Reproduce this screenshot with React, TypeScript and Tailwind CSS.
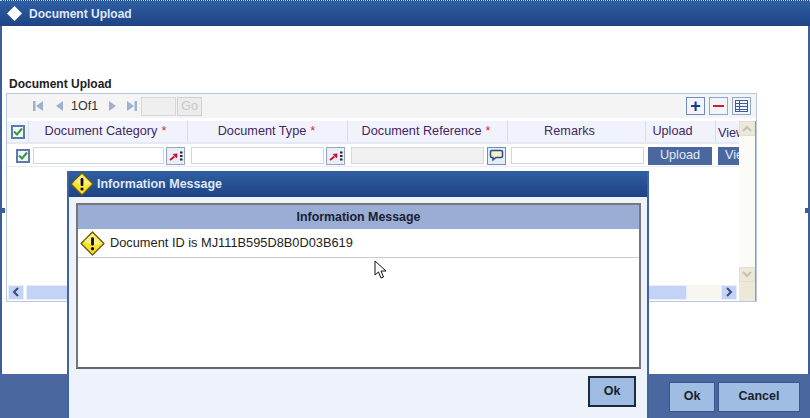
import React from "react";

const font = { fontFamily: '"Liberation Sans", Arial, sans-serif' };

function Warn({ size = 24 }: { size?: number }) {
  return (
    <svg width={size} height={size} viewBox="0 0 24 24" className="shrink-0">
      <path d="M12 1 L23 12 L12 23 L1 12 Z" fill="#f7e32a" stroke="#6b5a1a" strokeWidth="1.3" strokeLinejoin="round" />
      <path d="M12 2.6 L21.4 12 L12 14 L4 9.5 Z" fill="#fdf59a" opacity="0.7" />
      <rect x="10.6" y="6" width="2.8" height="8" rx="1.2" fill="#111" />
      <circle cx="12" cy="17" r="1.6" fill="#111" />
    </svg>
  );
}

function Check({ className }: { className: string }) {
  return (
    <div className={"flex items-center justify-center border-2 border-[#5d7ba6] bg-[#f3f6fb] " + className}>
      <svg width="10" height="9" viewBox="0 0 10 9">
        <path d="M1 4.5 L4 7.5 L9 1.5" fill="none" stroke="#2e9a3c" strokeWidth="2" />
      </svg>
    </div>
  );
}

function Lov() {
  return (
    <div className="flex h-[18px] w-[19px] shrink-0 items-center justify-center border border-[#8fa6c9] bg-[#e9eef7]">
      <svg width="15" height="12" viewBox="0 0 15 12">
        <path d="M2 10 L6.5 6.5" stroke="#c8102e" strokeWidth="2" fill="none" />
        <path d="M4.5 4 L9.5 3.5 L9 8.5 Z" fill="#c8102e" />
        <rect x="12" y="1.5" width="2.5" height="2" fill="#222" />
        <rect x="12" y="5" width="2.5" height="2" fill="#222" />
        <rect x="12" y="8.5" width="2.5" height="2" fill="#222" />
      </svg>
    </div>
  );
}

function Tri({ dir, bar }: { dir: "l" | "r"; bar?: boolean }) {
  return (
    <svg width="12" height="12" viewBox="0 0 12 12" className="shrink-0">
      {dir === "l" ? <path d="M10 1 L10 11 L3 6 Z" fill="#9fb1d1" /> : <path d="M2 1 L2 11 L9 6 Z" fill="#9fb1d1" />}
      {bar && (dir === "l" ? <rect x="0" y="1" width="2.5" height="10" fill="#9fb1d1" /> : <rect x="9.5" y="1" width="2.5" height="10" fill="#9fb1d1" />)}
    </svg>
  );
}

function Head({ w, label, req }: { w: string; label: string; req?: boolean }) {
  return (
    <div className={"flex h-full shrink-0 items-center justify-center gap-1 overflow-hidden whitespace-nowrap border-r border-[#d5dcec] pt-[1px] " + w}>
      <span>{label}</span>
      {req && <span className="text-[#e0203a]">*</span>}
    </div>
  );
}

function ScrollBtn({ children, className }: { children: React.ReactNode; className: string }) {
  return <div className={"flex shrink-0 items-center justify-center border border-[#e8edf6] bg-[#c3d3f5] " + className}>{children}</div>;
}

export default function App() {
  return (
    <div style={font} className="relative flex h-[418px] w-[810px] flex-col overflow-hidden bg-white">
      <div className="flex h-[26px] shrink-0 items-center gap-[6px] border-t border-dotted border-t-[#c8d6ea] bg-gradient-to-b from-[#2f5fa3] to-[#1e4384] pl-[6px]">
        <svg width="17" height="17" viewBox="0 0 17 17">
          <path d="M8.5 1 L16 8.5 L8.5 16 L1 8.5 Z" fill="#fff" />
        </svg>
        <span className="text-[12px] font-bold text-[#dfe8f6]">Document Upload</span>
      </div>

      <div className="flex min-h-0 flex-1 flex-col border-x-2 border-x-[#3c5f9c] pl-[4px] pr-[51px]">
        <div className="mt-[50px] h-[17px] pl-[3px] text-[12px] font-bold leading-[16px] text-[#222]">Document Upload</div>
        <div className="flex h-[209px] w-[751px] flex-col border border-[#b7c8e4] bg-white">
          <div className="flex h-[24px] shrink-0 items-center bg-[#f4f4f4] pl-[26px] pr-[5px] text-[12.5px] text-[#333]">
            <div className="flex items-center">
              <Tri dir="l" bar />
              <span className="w-[8px]" />
              <Tri dir="l" />
              <span className="ml-[6px] w-[36px]">1Of1</span>
              <Tri dir="r" />
              <span className="w-[6px]" />
              <Tri dir="r" bar />
              <span className="ml-[4px] h-[19px] w-[35px] border border-[#d8d8d8] bg-[#efefef]" />
              <span className="ml-[1px] flex h-[19px] w-[25px] items-center justify-center border border-[#d0d0d0] bg-[#ececec] text-[#c8c8c8]">Go</span>
            </div>
            <div className="ml-auto flex items-center gap-[4px]">
              <div className="flex h-[18px] w-[19px] items-center justify-center border border-[#6f8db8] bg-[#f1f5fb] text-[18px] font-bold leading-none text-[#0f3c8c]">+</div>
              <div className="flex h-[18px] w-[19px] items-center justify-center border border-[#8fa6c9] bg-[#f1f5fb]">
                <span className="h-[2px] w-[11px] bg-[#d01c2e]" />
              </div>
              <div className="flex h-[18px] w-[19px] items-center justify-center border border-[#8fa6c9] bg-[#f1f5fb]">
                <svg width="13" height="12" viewBox="0 0 13 12">
                  <path d="M0 .5H13M0 3.5H13M0 6.5H13M0 9.5H13M0 11.5H13M.5 0V12M4.5 0V12M12.5 0V12" stroke="#3b5c9a" strokeWidth="1" fill="none" />
                </svg>
              </div>
            </div>
          </div>

          <div className="flex min-h-0 flex-1 pt-[3px]">
            <div className="flex min-w-0 flex-1 flex-col">
              <div className="flex h-[23px] shrink-0 items-center border-b-2 border-b-[#e4e9f4] bg-[#f1f3fc] text-[12.7px] text-[#43265f]">
                <div className="flex h-full w-[22px] shrink-0 items-center justify-center border-r border-[#d5dcec]">
                  <Check className="h-[14px] w-[14px]" />
                </div>
                <Head w="w-[159px] pr-[5px]" label="Document Category" req />
                <Head w="w-[160px] pr-[2px]" label="Document Type" req />
                <Head w="w-[160px] pr-[3px]" label="Document Reference" req />
                <Head w="w-[138px] pr-[14px]" label="Remarks" />
                <Head w="w-[70px] pr-[16px]" label="Upload" />
                <div className="h-full flex-1 overflow-hidden whitespace-nowrap pl-[2px] pt-[1px] leading-[22px]">View</div>
              </div>
              <div className="flex h-[23px] shrink-0 items-center border-b border-b-[#e8ecf5] pt-[1px]">
                <div className="flex w-[26px] shrink-0 justify-end pr-[3px]">
                  <Check className="h-[14px] w-[14px]" />
                </div>
                <span className="h-[17px] w-[131px] shrink-0 border border-[#ccd6e8] bg-white" />
                <span className="w-[2px] shrink-0" />
                <Lov />
                <span className="ml-[6px] h-[17px] w-[133px] shrink-0 border border-[#ccd6e8] bg-white" />
                <span className="w-[2px] shrink-0" />
                <Lov />
                <span className="ml-[6px] h-[17px] w-[133px] shrink-0 border border-[#d5d8de] bg-[#f0f0f0]" />
                <div className="ml-[3px] flex h-[18px] w-[19px] shrink-0 items-center justify-center border border-[#6f8db8] bg-[#e6ecf6]">
                  <svg width="15" height="13" viewBox="0 0 15 13">
                    <path d="M3 1.5 H12 Q13.5 1.5 13.5 3 V7 Q13.5 8.5 12 8.5 H7 L4 11 V8.5 H3 Q1.5 8.5 1.5 7 V3 Q1.5 1.5 3 1.5 Z" fill="#fbeec2" stroke="#24508f" strokeWidth="1.5" />
                  </svg>
                </div>
                <span className="ml-[5px] h-[17px] w-[133px] shrink-0 border border-[#ccd6e8] bg-white" />
                <div className="ml-[4px] flex h-[18px] w-[64px] shrink-0 items-center justify-center bg-[#4a689f] text-[12.7px] text-[#e4ebf7]">Upload</div>
                <div className="ml-[6px] flex h-[18px] flex-1 items-center overflow-hidden whitespace-nowrap bg-[#4a689f] pl-[7px] text-[12.7px] text-[#e4ebf7]">View</div>
              </div>
              <div className="flex-1" />
              <div className="flex h-[18px] shrink-0 items-center pl-[1px] pr-[2px]">
                <ScrollBtn className="h-[15px] w-[16px]">
                  <svg width="8" height="10" viewBox="0 0 8 10"><path d="M6 1 L2 5 L6 9" fill="none" stroke="#3c4a78" strokeWidth="2" /></svg>
                </ScrollBtn>
                <div className="ml-[2px] h-[15px] w-[661px] shrink-0 border border-[#e8edf6] bg-[#c3d3f5]" />
                <div className="h-[15px] flex-1 bg-[#f7f6f1]" />
                <ScrollBtn className="h-[15px] w-[16px]">
                  <svg width="8" height="10" viewBox="0 0 8 10"><path d="M2 1 L6 5 L2 9" fill="none" stroke="#3c4a78" strokeWidth="2" /></svg>
                </ScrollBtn>
              </div>
            </div>
            <div className="flex w-[17px] shrink-0 flex-col border-r border-r-[#7f9fd0] bg-[#fbfbf8]">
              <div className="flex h-[15px] shrink-0 items-center justify-center border border-[#e2dfd0] bg-[#ece9d8]">
                <svg width="10" height="7" viewBox="0 0 10 7"><path d="M1 6 L5 2 L9 6" fill="none" stroke="#c5c2b3" strokeWidth="2" /></svg>
              </div>
              <div className="flex-1" />
              <div className="flex h-[15px] shrink-0 items-center justify-center border border-[#e2dfd0] bg-[#ece9d8]">
                <svg width="10" height="7" viewBox="0 0 10 7"><path d="M1 1 L5 5 L9 1" fill="none" stroke="#c5c2b3" strokeWidth="2" /></svg>
              </div>
              <div className="h-[19px] shrink-0 bg-[#ece9d8]" />
            </div>
          </div>
        </div>
      </div>

      <div className="flex h-[44px] shrink-0 items-center justify-end gap-[3px] bg-[#4a689f] pr-[10px] pt-[1px] text-[12.5px] font-bold text-[#1a1f2a]">
        <div className="flex h-[30px] w-[46px] items-center justify-center border border-[#3a5689] bg-[#9fbde3]">Ok</div>
        <div className="flex h-[30px] w-[82px] items-center justify-center border border-[#3a5689] bg-[#9fbde3]">Cancel</div>
      </div>

      {/* resize handles */}
      <span className="absolute left-0 top-[208px] h-[5px] w-[5px] bg-[#3c5f9c]" />
      <span className="absolute right-0 top-[208px] h-[5px] w-[5px] bg-[#3c5f9c]" />
      <span className="absolute bottom-0 left-[402px] h-[4px] w-[5px] bg-[#3c5f9c]" />

      {/* Information Message dialog */}
      <div className="absolute left-[67px] top-[171px] flex h-[247px] w-[582px] flex-col border-x-2 border-[#3f64a3] bg-[#eef2fb]">
        <div className="flex h-[26px] shrink-0 items-center gap-[3px] bg-gradient-to-b from-[#2f5fa3] to-[#1e4384] pl-[1px]">
          <Warn size={24} />
          <span className="text-[12.5px] font-bold text-[#dfe8f6]">Information Message</span>
        </div>
        <div className="flex flex-1 flex-col px-[7px] pt-[6px]">
          <div className="flex h-[166px] w-[565px] flex-col border-2 border-[#777] border-b-[#666] bg-white">
            <div className="flex h-[24px] shrink-0 items-center justify-center bg-[#9aadd5] text-[12.4px] font-bold text-[#1a2030]">Information Message</div>
            <div className="flex h-[29px] shrink-0 items-center gap-[5px] border-b border-b-[#cccccc] pl-[2px] text-[12.8px] text-[#222]">
              <Warn size={25} />
              <span>Document ID is MJ111B595D8B0D03B619</span>
            </div>
          </div>
          <div className="mt-[7px] flex justify-end pr-[4px]">
            <div className="flex h-[31px] w-[48px] items-center justify-center border-2 border-[#1c2a3c] bg-[#9fbde3] text-[12.5px] font-bold text-[#1a1f2a]">Ok</div>
          </div>
        </div>
      </div>

      {/* mouse pointer */}
      <svg className="absolute left-[374px] top-[260px]" width="14" height="20" viewBox="0 0 14 20">
        <path d="M1 1 L1 15 L4.5 12 L7 18 L9.5 17 L7 11 L12 11 Z" fill="#fff" stroke="#111" strokeWidth="1" strokeLinejoin="round" />
      </svg>
    </div>
  );
}
